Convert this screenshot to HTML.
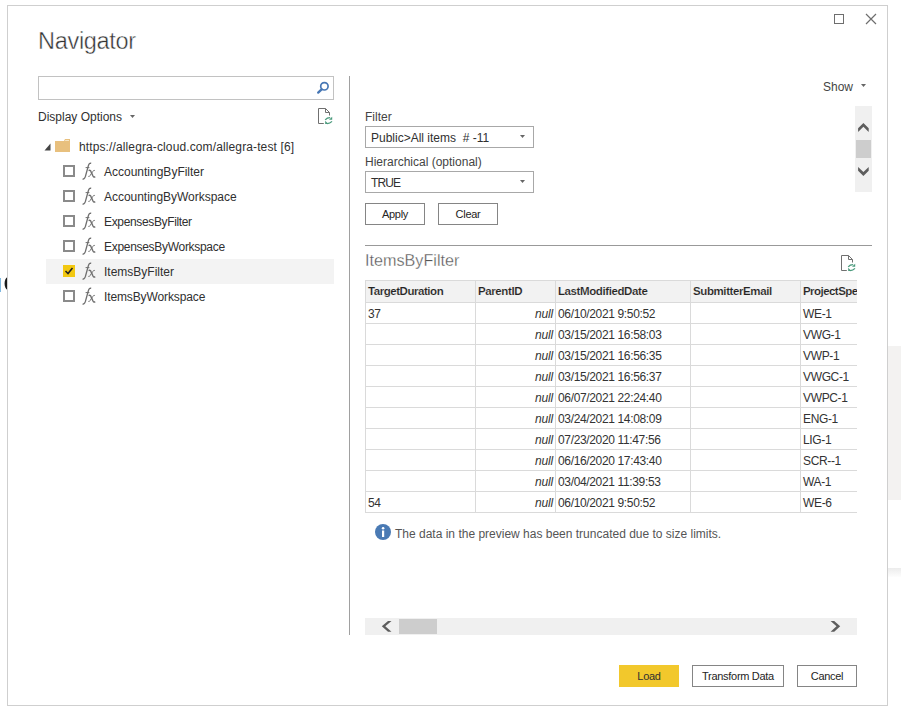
<!DOCTYPE html><html><head><meta charset="utf-8"><style>
*{margin:0;padding:0;box-sizing:border-box}
html,body{width:901px;height:719px;overflow:hidden;background:#fff;font-family:"Liberation Sans",sans-serif;font-size:12px;color:#303030}
.a{position:absolute}
.t{position:absolute;white-space:pre;line-height:1}
.hl{position:absolute;height:1px;background:#dadada}
.vl{position:absolute;width:1px;background:#dadada}
.cb{position:absolute;width:12px;height:12px;border:2px solid #8a8a8a;background:#fff}
.fx{position:absolute;font-family:"Liberation Serif",serif;font-style:italic;font-size:17px;color:#6a6a6a;line-height:1;white-space:pre}
.btn{position:absolute;border:1px solid #858585;background:#fff;text-align:center;font-size:11px;letter-spacing:-0.3px;color:#252423;white-space:pre}
.tri{position:absolute;width:0;height:0;border-left:3px solid transparent;border-right:3px solid transparent;border-top:4px solid #666}
.th{position:absolute;white-space:pre;line-height:1;font-weight:bold;font-size:11.5px;color:#252423;-webkit-text-stroke:0.15px #f2f2f2}
.td{position:absolute;white-space:pre;line-height:1;font-size:12px;color:#333;letter-spacing:-0.35px}
.nl{position:absolute;white-space:pre;line-height:1;font-size:12px;letter-spacing:-0.2px;font-style:italic;color:#333;text-align:right;width:60px}
</style></head><body>
<div class="a" style="left:888px;top:346px;width:13px;height:154px;background:#f3f2f1"></div>
<div class="a" style="left:888px;top:568px;width:13px;height:9px;background:linear-gradient(#ececec,#fdfdfd)"></div>
<div class="a" style="left:0px;top:278px;width:1px;height:14px;background:#7fb8e0"></div>
<svg class="a" style="left:0;top:270px" width="8" height="25" viewBox="0 270 8 25"><path d="M7.5 277C3.6 279 3.6 288 7.5 290Z" fill="#1a1a1a"/></svg>
<div class="a" style="left:7px;top:5px;width:881px;height:701px;border:1px solid #cfcfcf;background:#fff"></div>
<div class="a" style="left:834px;top:14px;width:10px;height:10px;border:1px solid #6e6e6e"></div>
<svg class="a" style="left:865px;top:13px" width="12" height="12" viewBox="0 0 12 12"><path d="M1 1L11 11M11 1L1 11" stroke="#6e6e6e" stroke-width="1.2" fill="none"/></svg>
<div class="t" style="left:38px;top:29.5px;font-size:23.5px;color:#333;letter-spacing:-0.3px;-webkit-text-stroke:0.45px #fff">Navigator</div>
<div class="a" style="left:38px;top:76px;width:296px;height:24px;border:1px solid #c2c2c2"></div>
<svg class="a" style="left:315px;top:81px" width="15" height="15" viewBox="0 0 15 15"><circle cx="9.4" cy="5.3" r="3.7" stroke="#4777b5" stroke-width="1.7" fill="none"/><path d="M6.6 8.3L3.2 11.6" stroke="#4777b5" stroke-width="2.3" stroke-linecap="round"/></svg>
<div class="t" style="left:38px;top:111px">Display Options</div>
<svg class="a" style="left:130px;top:114.5px" width="5" height="3" viewBox="0 0 5 3"><path d="M0 0H5L2.5 3Z" fill="#666"/></svg>
<svg class="a" style="left:318px;top:108px" width="16" height="17" viewBox="0 0 16 17"><path d="M0.5 0.5H7.5L11.5 4.5V7.5M7.5 0.5V4.5H11.5M0.5 0.5V15.5H5.8" stroke="#707070" stroke-width="1" fill="none"/><path d="M7.2 11.8Q9 9.6 12.2 9.6M14 13.4Q12 15.6 9 15.6" stroke="#4a9a7c" stroke-width="1.3" fill="none"/><path d="M11 11.8H14.2V8.8ZM7.2 12.8V16H10.4Z" fill="#4a9a7c"/></svg>
<svg class="a" style="left:44px;top:143px" width="7" height="8" viewBox="0 0 7 8"><path d="M6.5 0.5V7.5H0.5Z" fill="#444"/></svg>
<svg class="a" style="left:55px;top:139px" width="16" height="14" viewBox="0 0 16 14"><path d="M0 2H9L10 0H15V13H0Z" fill="#e8c07e"/><path d="M10.3 1H14V2H9.8Z" fill="#f7e6c4"/></svg>
<div class="t" style="left:79px;top:141px;letter-spacing:0.12px">https://allegra-cloud.com/allegra-test [6]</div>
<div class="a" style="left:46px;top:259px;width:288px;height:25px;background:#f3f3f3"></div>
<div class="cb" style="left:63px;top:165px"></div>
<svg class="a" style="left:80px;top:160px" width="18" height="22" viewBox="0 0 18 22"><path d="M2.6 18.8Q4.4 19.6 5.4 16.4L8.4 5.6Q9.3 2.6 11.2 3.4" stroke="#707070" stroke-width="1.35" fill="none"/><path d="M5.6 7.6H9.4" stroke="#707070" stroke-width="1"/><path d="M8.6 10.6Q10.2 9.6 11 11.6L13 16Q13.8 17.6 15.2 16.6" stroke="#707070" stroke-width="1.45" fill="none"/><path d="M14.8 10.4Q14 10 12.6 11.6L10.2 15.4Q9.4 17 8.4 16.4" stroke="#707070" stroke-width="1" fill="none"/></svg>
<div class="t" style="left:104px;top:166px;letter-spacing:0px">AccountingByFilter</div>
<div class="cb" style="left:63px;top:190px"></div>
<svg class="a" style="left:80px;top:185px" width="18" height="22" viewBox="0 0 18 22"><path d="M2.6 18.8Q4.4 19.6 5.4 16.4L8.4 5.6Q9.3 2.6 11.2 3.4" stroke="#707070" stroke-width="1.35" fill="none"/><path d="M5.6 7.6H9.4" stroke="#707070" stroke-width="1"/><path d="M8.6 10.6Q10.2 9.6 11 11.6L13 16Q13.8 17.6 15.2 16.6" stroke="#707070" stroke-width="1.45" fill="none"/><path d="M14.8 10.4Q14 10 12.6 11.6L10.2 15.4Q9.4 17 8.4 16.4" stroke="#707070" stroke-width="1" fill="none"/></svg>
<div class="t" style="left:104px;top:191px;letter-spacing:-0.03px">AccountingByWorkspace</div>
<div class="cb" style="left:63px;top:215px"></div>
<svg class="a" style="left:80px;top:210px" width="18" height="22" viewBox="0 0 18 22"><path d="M2.6 18.8Q4.4 19.6 5.4 16.4L8.4 5.6Q9.3 2.6 11.2 3.4" stroke="#707070" stroke-width="1.35" fill="none"/><path d="M5.6 7.6H9.4" stroke="#707070" stroke-width="1"/><path d="M8.6 10.6Q10.2 9.6 11 11.6L13 16Q13.8 17.6 15.2 16.6" stroke="#707070" stroke-width="1.45" fill="none"/><path d="M14.8 10.4Q14 10 12.6 11.6L10.2 15.4Q9.4 17 8.4 16.4" stroke="#707070" stroke-width="1" fill="none"/></svg>
<div class="t" style="left:104px;top:216px;letter-spacing:-0.35px">ExpensesByFilter</div>
<div class="cb" style="left:63px;top:240px"></div>
<svg class="a" style="left:80px;top:235px" width="18" height="22" viewBox="0 0 18 22"><path d="M2.6 18.8Q4.4 19.6 5.4 16.4L8.4 5.6Q9.3 2.6 11.2 3.4" stroke="#707070" stroke-width="1.35" fill="none"/><path d="M5.6 7.6H9.4" stroke="#707070" stroke-width="1"/><path d="M8.6 10.6Q10.2 9.6 11 11.6L13 16Q13.8 17.6 15.2 16.6" stroke="#707070" stroke-width="1.45" fill="none"/><path d="M14.8 10.4Q14 10 12.6 11.6L10.2 15.4Q9.4 17 8.4 16.4" stroke="#707070" stroke-width="1" fill="none"/></svg>
<div class="t" style="left:104px;top:241px;letter-spacing:-0.3px">ExpensesByWorkspace</div>
<div class="a" style="left:63px;top:265px;width:12px;height:12px;background:#f2c811"></div>
<svg class="a" style="left:63px;top:265px" width="12" height="12" viewBox="0 0 12 12"><path d="M2.5 6L5 8.5L9.5 3" stroke="#222" stroke-width="1.6" fill="none"/></svg>
<svg class="a" style="left:80px;top:260px" width="18" height="22" viewBox="0 0 18 22"><path d="M2.6 18.8Q4.4 19.6 5.4 16.4L8.4 5.6Q9.3 2.6 11.2 3.4" stroke="#707070" stroke-width="1.35" fill="none"/><path d="M5.6 7.6H9.4" stroke="#707070" stroke-width="1"/><path d="M8.6 10.6Q10.2 9.6 11 11.6L13 16Q13.8 17.6 15.2 16.6" stroke="#707070" stroke-width="1.45" fill="none"/><path d="M14.8 10.4Q14 10 12.6 11.6L10.2 15.4Q9.4 17 8.4 16.4" stroke="#707070" stroke-width="1" fill="none"/></svg>
<div class="t" style="left:104px;top:266px;letter-spacing:0px">ItemsByFilter</div>
<div class="cb" style="left:63px;top:290px"></div>
<svg class="a" style="left:80px;top:285px" width="18" height="22" viewBox="0 0 18 22"><path d="M2.6 18.8Q4.4 19.6 5.4 16.4L8.4 5.6Q9.3 2.6 11.2 3.4" stroke="#707070" stroke-width="1.35" fill="none"/><path d="M5.6 7.6H9.4" stroke="#707070" stroke-width="1"/><path d="M8.6 10.6Q10.2 9.6 11 11.6L13 16Q13.8 17.6 15.2 16.6" stroke="#707070" stroke-width="1.45" fill="none"/><path d="M14.8 10.4Q14 10 12.6 11.6L10.2 15.4Q9.4 17 8.4 16.4" stroke="#707070" stroke-width="1" fill="none"/></svg>
<div class="t" style="left:104px;top:291px;letter-spacing:-0.12px">ItemsByWorkspace</div>
<div class="a" style="left:349px;top:76px;width:1px;height:559px;background:#a0a0a0"></div>
<div class="t" style="left:823px;top:81px;color:#444">Show</div>
<svg class="a" style="left:861px;top:84px" width="5" height="3" viewBox="0 0 5 3"><path d="M0 0H5L2.5 3Z" fill="#666"/></svg>
<div class="t" style="left:365px;top:111px;color:#444">Filter</div>
<div class="a" style="left:365px;top:126px;width:169px;height:22px;border:1px solid #a8a8a8"></div>
<div class="t" style="left:371px;top:132px">Public&gt;All items  # -11</div>
<svg class="a" style="left:520px;top:135px" width="5" height="3" viewBox="0 0 5 3"><path d="M0 0H5L2.5 3Z" fill="#666"/></svg>
<div class="t" style="left:365px;top:156px;color:#444">Hierarchical (optional)</div>
<div class="a" style="left:365px;top:171px;width:169px;height:22px;border:1px solid #a8a8a8"></div>
<div class="t" style="left:371px;top:177px;letter-spacing:-0.9px">TRUE</div>
<svg class="a" style="left:520px;top:180px" width="5" height="3" viewBox="0 0 5 3"><path d="M0 0H5L2.5 3Z" fill="#666"/></svg>
<div class="btn" style="left:365px;top:203px;width:60px;height:22px;line-height:20px">Apply</div>
<div class="btn" style="left:438px;top:203px;width:60px;height:22px;line-height:20px">Clear</div>
<div class="a" style="left:855px;top:106px;width:17px;height:86px;background:#f0f0f0"></div>
<svg class="a" style="left:855px;top:106px" width="17" height="86" viewBox="0 0 17 86"><path d="M8.4 17L13.7 22.2V25.9L8.4 20.8L3.1 25.9V22.2Z" fill="#5d5d5d"/><path d="M3.1 61L8.4 66L13.7 61V64.8L8.4 69.9L3.1 64.8Z" fill="#5d5d5d"/></svg>
<div class="a" style="left:856px;top:140px;width:15px;height:18px;background:#cdcdcd"></div>
<div class="a" style="left:365px;top:245px;width:507px;height:1px;background:#999"></div>
<div class="t" style="left:365px;top:252px;font-size:16.2px;color:#555;-webkit-text-stroke:0.3px #fff">ItemsByFilter</div>
<svg class="a" style="left:841px;top:255px" width="16" height="17" viewBox="0 0 16 17"><path d="M0.5 0.5H7.5L11.5 4.5V7.5M7.5 0.5V4.5H11.5M0.5 0.5V15.5H5.8" stroke="#707070" stroke-width="1" fill="none"/><path d="M7.2 11.8Q9 9.6 12.2 9.6M14 13.4Q12 15.6 9 15.6" stroke="#4a9a7c" stroke-width="1.3" fill="none"/><path d="M11 11.8H14.2V8.8ZM7.2 12.8V16H10.4Z" fill="#4a9a7c"/></svg>
<div class="a" style="left:365px;top:280px;width:492px;height:233px;overflow:hidden">
<div class="a" style="left:0;top:0;width:492px;height:22px;background:#f2f2f2"></div>
<div class="hl" style="left:0;top:0px;width:492px"></div>
<div class="hl" style="left:0;top:22px;width:492px"></div>
<div class="hl" style="left:0;top:43px;width:492px"></div>
<div class="hl" style="left:0;top:64px;width:492px"></div>
<div class="hl" style="left:0;top:85px;width:492px"></div>
<div class="hl" style="left:0;top:106px;width:492px"></div>
<div class="hl" style="left:0;top:127px;width:492px"></div>
<div class="hl" style="left:0;top:148px;width:492px"></div>
<div class="hl" style="left:0;top:169px;width:492px"></div>
<div class="hl" style="left:0;top:190px;width:492px"></div>
<div class="hl" style="left:0;top:211px;width:492px"></div>
<div class="hl" style="left:0;top:232px;width:492px"></div>
<div class="vl" style="left:0px;top:0;height:233px"></div>
<div class="vl" style="left:110px;top:0;height:233px"></div>
<div class="vl" style="left:190px;top:0;height:233px"></div>
<div class="vl" style="left:325px;top:0;height:233px"></div>
<div class="vl" style="left:435px;top:0;height:233px"></div>
<div class="th" style="left:3px;top:6px;letter-spacing:-0.45px">TargetDuration</div>
<div class="th" style="left:113px;top:6px;letter-spacing:-0.4px">ParentID</div>
<div class="th" style="left:193px;top:6px;letter-spacing:-0.4px">LastModifiedDate</div>
<div class="th" style="left:328px;top:6px;letter-spacing:-0.4px">SubmitterEmail</div>
<div class="th" style="left:438px;top:6px;letter-spacing:-0.55px">ProjectSpe</div>
<div class="td" style="left:3px;top:28px">37</div>
<div class="nl" style="left:128px;top:28px">null</div>
<div class="td" style="left:193px;top:28px">06/10/2021 9:50:52</div>
<div class="td" style="left:438px;top:28px">WE-1</div>
<div class="nl" style="left:128px;top:49px">null</div>
<div class="td" style="left:193px;top:49px">03/15/2021 16:58:03</div>
<div class="td" style="left:438px;top:49px">VWG-1</div>
<div class="nl" style="left:128px;top:70px">null</div>
<div class="td" style="left:193px;top:70px">03/15/2021 16:56:35</div>
<div class="td" style="left:438px;top:70px">VWP-1</div>
<div class="nl" style="left:128px;top:91px">null</div>
<div class="td" style="left:193px;top:91px">03/15/2021 16:56:37</div>
<div class="td" style="left:438px;top:91px">VWGC-1</div>
<div class="nl" style="left:128px;top:112px">null</div>
<div class="td" style="left:193px;top:112px">06/07/2021 22:24:40</div>
<div class="td" style="left:438px;top:112px">VWPC-1</div>
<div class="nl" style="left:128px;top:133px">null</div>
<div class="td" style="left:193px;top:133px">03/24/2021 14:08:09</div>
<div class="td" style="left:438px;top:133px">ENG-1</div>
<div class="nl" style="left:128px;top:154px">null</div>
<div class="td" style="left:193px;top:154px">07/23/2020 11:47:56</div>
<div class="td" style="left:438px;top:154px">LIG-1</div>
<div class="nl" style="left:128px;top:175px">null</div>
<div class="td" style="left:193px;top:175px">06/16/2020 17:43:40</div>
<div class="td" style="left:438px;top:175px">SCR--1</div>
<div class="nl" style="left:128px;top:196px">null</div>
<div class="td" style="left:193px;top:196px">03/04/2021 11:39:53</div>
<div class="td" style="left:438px;top:196px">WA-1</div>
<div class="td" style="left:3px;top:217px">54</div>
<div class="nl" style="left:128px;top:217px">null</div>
<div class="td" style="left:193px;top:217px">06/10/2021 9:50:52</div>
<div class="td" style="left:438px;top:217px">WE-6</div>
</div>
<svg class="a" style="left:375px;top:524px" width="16" height="16" viewBox="0 0 16 16"><circle cx="8" cy="8" r="8" fill="#4a7ab4"/><rect x="7" y="6.5" width="2.2" height="6.5" fill="#fff"/><circle cx="8.1" cy="4.2" r="1.3" fill="#fff"/></svg>
<div class="t" style="left:395px;top:528px;color:#555">The data in the preview has been truncated due to size limits.</div>
<div class="a" style="left:365px;top:618px;width:492px;height:17px;background:#f0f0f0"></div>
<div class="a" style="left:399px;top:619px;width:38px;height:15px;background:#cdcdcd"></div>
<svg class="a" style="left:365px;top:618px" width="492" height="17" viewBox="0 0 492 17"><path d="M23 2.9H26.5L20.3 8.3L26.5 13.7H23L16.8 8.3Z" fill="#5d5d5d"/><path d="M465.6 2.9H469.2L475.2 8.3L469.2 13.7H465.6L471.5 8.3Z" fill="#5d5d5d"/></svg>
<div class="a" style="left:619px;top:665px;width:60px;height:22px;background:#f2c82c;text-align:center;line-height:22px;white-space:pre;font-size:11px;letter-spacing:-0.3px">Load</div>
<div class="btn" style="left:692px;top:665px;width:92px;height:22px;line-height:20px">Transform Data</div>
<div class="btn" style="left:797px;top:665px;width:60px;height:22px;line-height:20px">Cancel</div>
</body></html>
